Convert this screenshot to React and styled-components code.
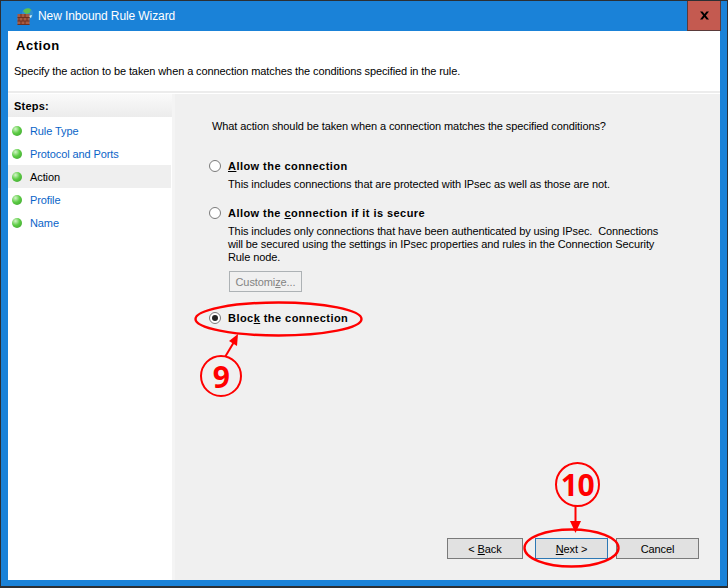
import React from 'react';
import styled, { createGlobalStyle } from 'styled-components';

const Global = createGlobalStyle`
  html, body { margin: 0; padding: 0; background: #fff; }
  body { font-family: "Liberation Sans", Arial, sans-serif; font-size: 11px; color: #000; letter-spacing: -0.1px; }
`;
const Win = styled.div`
  position: relative; width: 728px; height: 588px; box-sizing: border-box;
  background: #1a82d8; border: 1px solid #2c2f33; border-bottom-width: 2px;
  display: flex; flex-direction: column; overflow: hidden;
`;
const TitleBar = styled.div`
  height: 30px; flex: none; display: flex; align-items: center; padding-left: 16px; gap: 3px;
  color: #fff; font-size: 12px; letter-spacing: -0.1px; position: relative;
`;
const Close = styled.div`
  position: absolute; right: 6px; top: 0; width: 34px; height: 30px; box-sizing: border-box;
  background: #c45a50; border: 1px solid #5a3a3a; border-top: none;
  display: flex; align-items: center; justify-content: center;
`;
const Client = styled.div`
  flex: 1; margin: 0 7px 6px 7px; background: #fff; display: flex; flex-direction: column; min-height: 0;
`;
const Header = styled.header`
  height: 62px; flex: none; box-sizing: border-box; padding: 7px 6px 0; border-bottom: 2px solid #ececec;
`;
const H1 = styled.h1`
  margin: 0 0 0 2px; font-size: 13px; line-height: 16px; font-weight: 700; letter-spacing: 0.55px;
`;
const Sub = styled.p`margin: 10px 0 0; font-size: 11px; line-height: 14px;`;
const Body = styled.div`flex: 1; display: flex; min-height: 0; padding-top: 1px;`;
const Side = styled.nav`width: 164px; flex: none; border-right: 3px solid #f4f4f4;`;
const StepsHead = styled.div`
  height: 23px; box-sizing: border-box; padding: 5px 6px 0; font-weight: 700; font-size: 11px; line-height: 14px; letter-spacing: 0.2px;
  background: linear-gradient(#fafafa, #ececec); margin-bottom: 2px;
`;
const Step = styled.div`
  height: 23px; display: flex; align-items: center; padding-left: 4px; gap: 8px; margin-right: 1px;
  color: ${p => (p.$current ? '#000' : '#0a64c8')};
  background: ${p => (p.$current ? '#efefef' : 'transparent')};
`;
const Dot = styled.span`
  width: 10px; height: 10px; border-radius: 50%; flex: none;
  background: radial-gradient(circle at 35% 30%, #d4f4c8 0, #5ccc44 45%, #3a9c2c 100%);
`;
const Main = styled.main`
  flex: 1; background: #f0f0f0; position: relative; padding: 25px 0 0 37px; display: flex; flex-direction: column;
`;
const Question = styled.p`margin: 0 0 26px; line-height: 14px;`;
const Option = styled.div`
  display: grid; grid-template-columns: 12px 1fr; column-gap: 7px; margin: ${p => p.$mt || 0}px 0 ${p => p.$mb || 0}px -3px;
`;
const Radio = styled.span`
  width: 12px; height: 12px; box-sizing: border-box; border-radius: 50%; border: 1px solid #7a7a7a; background: #fff;
  display: flex; align-items: center; justify-content: center; margin-top: 1px;
  &::after { content: ''; width: 6px; height: 6px; border-radius: 50%; background: ${p => (p.$on ? '#222' : 'transparent')}; }
`;
const Label = styled.div`font-weight: 700; line-height: 14px; letter-spacing: 0.45px;`;
const Desc = styled.div`grid-column: 2; margin-top: 5px; line-height: 13px; width: 436px;`;
const Mn = styled.span`text-decoration: underline;`;
const Customize = styled.div`
  margin: 7px 0 0 17px; width: 73px; height: 21px; box-sizing: border-box; border: 1px solid #adb2b5; color: #838383;
  display: flex; align-items: center; justify-content: center;
`;
const Buttons = styled.div`
  position: absolute; bottom: 21px; right: 21px; display: flex; gap: 8px;
`;
const Btn = styled.div`
  height: 21px; width: ${p => p.$w}px; box-sizing: border-box; display: flex; align-items: center; justify-content: center;
  background: #e1e1e1; border: 1px solid ${p => (p.$focus ? '#2d78b4' : '#7a7a7a')}; margin-left: ${p => p.$ml || 0}px;
`;
const Badge = styled.div`
  position: absolute; box-sizing: border-box; border: 2px solid #f00; border-radius: 50%; background: #f0f0f0;
  left: ${p => p.$x}px; top: ${p => p.$y}px; width: ${p => p.$d}px; height: ${p => p.$d}px;
  display: flex; align-items: center; justify-content: center; color: #f00; font-weight: 700; font-size: 30px;
  font-family: "Open Sans", "Liberation Sans", sans-serif; letter-spacing: -0.5px;
`;
const Marks = styled.svg`position: absolute; left: 0; top: 0; pointer-events: none;`;
const FirewallIcon = styled.svg`flex: none; margin-right: 2px;`;

const BrickIcon = () => (
  <FirewallIcon width="16" height="17" viewBox="0 0 16 17">
    <circle cx="10.5" cy="5.8" r="5.7" fill="#2f8fd0" />
    <path d="M6 3c2-3 6-3.5 8-1.5L12.5 5 9 6z" fill="#5cc050" />
    <path d="M11 8l4-1-1 3z" fill="#d8f0f8" />
    <rect x="0.5" y="6" width="12" height="11" fill="#a85a40" />
    <path d="M0.5 9.5h12M0.5 13h12M0.5 16.5h12M4 6v3.5M8 6v3.5M2 9.5V13M6 9.5V13M10 9.5V13M4 13v3.5M8 13v3.5" stroke="#6e3020" strokeWidth="1" />
  </FirewallIcon>
);

export default function App() {
  return (
    <Win>
      <Global />
      <TitleBar>
        <BrickIcon />
        New Inbound Rule Wizard
        <Close>
          <svg width="11" height="9" viewBox="0 0 11 9"><path d="M1 .5h2.5L5.5 3l2-2.5H10L6.8 4.5 10 8.5H7.5L5.5 6l-2 2.5H1l3.2-4z" fill="#000" /></svg>
        </Close>
      </TitleBar>
      <Client>
        <Header>
          <H1>Action</H1>
          <Sub>Specify the action to be taken when a connection matches the conditions specified in the rule.</Sub>
        </Header>
        <Body>
          <Side>
            <StepsHead>Steps:</StepsHead>
            <Step><Dot />Rule Type</Step>
            <Step><Dot />Protocol and Ports</Step>
            <Step $current><Dot />Action</Step>
            <Step><Dot />Profile</Step>
            <Step><Dot />Name</Step>
          </Side>
          <Main>
            <Question>What action should be taken when a connection matches the specified conditions?</Question>
            <Option $mb={15}>
              <Radio />
              <Label><Mn>A</Mn>llow the connection</Label>
              <Desc>This includes connections that are protected with IPsec as well as those are not.</Desc>
            </Option>
            <Option>
              <Radio />
              <Label>Allow the <Mn>c</Mn>onnection if it is secure</Label>
              <Desc>This includes only connections that have been authenticated by using IPsec.&nbsp; Connections will be secured using the settings in IPsec properties and rules in the Connection Security Rule node.</Desc>
            </Option>
            <Customize><span>Customi<Mn>z</Mn>e...</span></Customize>
            <Option $mt={19}>
              <Radio $on />
              <Label>Bloc<Mn>k</Mn> the connection</Label>
            </Option>
            <Buttons>
              <Btn $w={76}><span>&lt; <Mn>B</Mn>ack</span></Btn>
              <Btn $w={73} $focus $ml={4}><span><Mn>N</Mn>ext &gt;</span></Btn>
              <Btn $w={83}>Cancel</Btn>
            </Buttons>
          </Main>
        </Body>
      </Client>
      <Marks width="728" height="588" viewBox="0 0 728 588">
        <ellipse cx="277.5" cy="318" rx="83" ry="16.5" fill="none" stroke="#f00" strokeWidth="2.4" />
        <ellipse cx="570.5" cy="547" rx="47" ry="18.5" fill="none" stroke="#f00" strokeWidth="2.4" />
        <path d="M224 356 L233 341" stroke="#f00" strokeWidth="2" />
        <path d="M237 333 L228 340 L236 345z" fill="#f00" />
        <path d="M574.5 504 V521" stroke="#f00" strokeWidth="2" />
        <path d="M569 520 H580 L574.5 532z" fill="#f00" />
      </Marks>
      <Badge $x={199} $y={354} $d={42}>9</Badge>
      <Badge $x={554} $y={461} $d={45}>10</Badge>
    </Win>
  );
}
